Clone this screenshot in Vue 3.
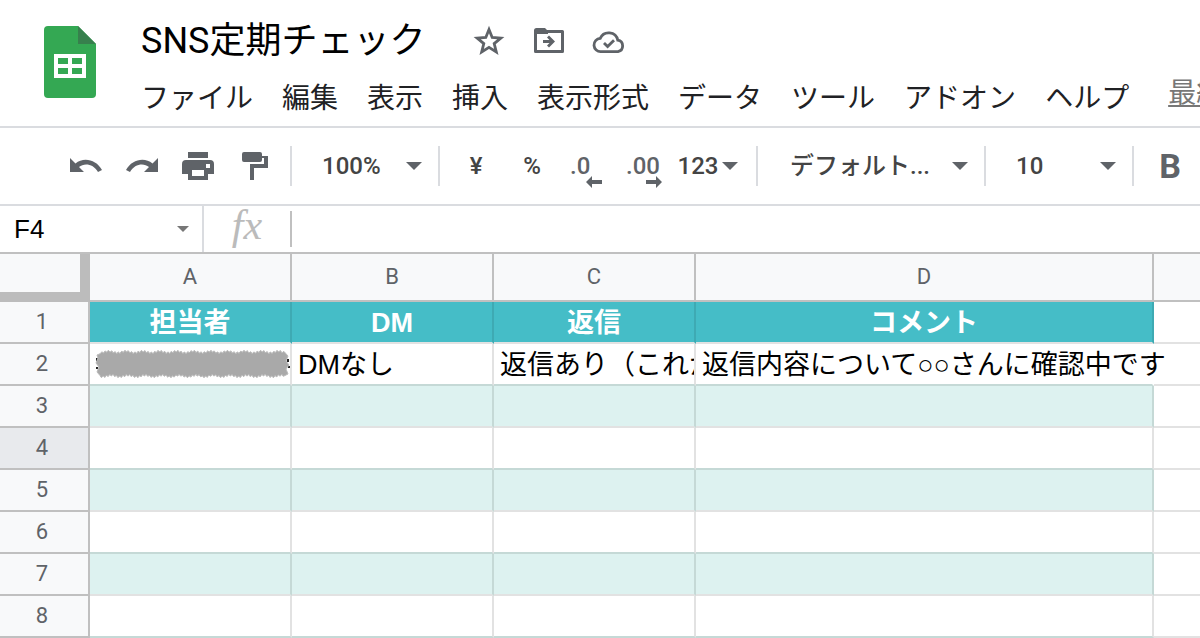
<template>
  <div class="sheet-app">
    <header class="header">
      <svg class="logo" viewBox="0 0 52 72" aria-hidden="true">
        <path d="M4 0H34L52 18V68a4 4 0 0 1-4 4H4a4 4 0 0 1-4-4V4a4 4 0 0 1 4-4z" fill="#34a853" />
        <path d="M34 0L52 18H34z" fill="#37804d" />
        <path
          d="M10 28H42V52H10zM14 32V38H24V32zM28 32V38H38V32zM14 42V48H24V42zM28 42V48H38V42z"
          fill="#fff"
          fill-rule="evenodd"
        />
      </svg>
      <div class="header-main">
        <div class="title-row">
          <h1>{{ title }}</h1>
          <div class="title-actions">
            <button type="button" aria-label="スター">
              <svg viewBox="0 0 36 36">
                <path
                  d="M18 6.5l3.2 8 8.6.6-6.6 5.5 2.1 8.4-7.3-4.6-7.3 4.6 2.1-8.4-6.6-5.5 8.6-.6z"
                  class="stroke"
                  stroke-width="2.8"
                />
              </svg>
            </button>
            <button type="button" aria-label="移動">
              <svg viewBox="0 0 36 36">
                <path d="M4.5 8.500H31.5V28.500H4.5z" class="stroke" stroke-width="3" stroke-linejoin="round" />
                <path d="M3 11V7.500a2.500 2.500 0 0 1 2.500-2.500H14l3 3v3z" />
                <path d="M12 17h6.500l-2.500-2.500 2-2L24 18.500l-6 6-2-2 2.500-2.500H12z" />
              </svg>
            </button>
            <button type="button" aria-label="保存済み">
              <svg viewBox="0 0 36 36">
                <path
                  d="M10 28.600a6.600 6.600 0 0 1-.8-13.200A9.300 9.300 0 0 1 26.800 17.200 5.800 5.800 0 0 1 27 28.600z"
                  class="stroke"
                  stroke-width="2.800"
                />
                <path d="M13 20l3.600 3.600 6.400-6.400" class="stroke" stroke-width="2.800" />
              </svg>
            </button>
          </div>
        </div>
        <nav class="menu">
          <button v-for="item in menus" :key="item" type="button">{{ item }}</button>
          <a href="#" class="last-edit">最終</a>
        </nav>
      </div>
    </header>

    <div class="toolbar">
      <button type="button" aria-label="元に戻す">
        <svg class="icon" viewBox="0 0 36 36">
          <path d="M2 10v14h14l-5-5c5.500-4.500 14.500-3 19 5l4-2C28.500 11.500 15.500 8.500 7.500 15.500z" />
        </svg>
      </button>
      <button type="button" aria-label="やり直し">
        <svg class="icon" viewBox="0 0 36 36">
          <path d="M34 10v14H20l5-5c-5.500-4.500-14.500-3-19 5l-4-2C7.500 11.500 20.500 8.500 28.500 15.500z" />
        </svg>
      </button>
      <button type="button" aria-label="印刷">
        <svg class="icon" viewBox="0 0 36 36">
          <path d="M8 4H28V10H8z" />
          <path
            d="M6 12H30a4 4 0 0 1 4 4V26H28V32H8V26H2V16a4 4 0 0 1 4-4zM26 16V20H30V16zM12 22V28H24V22z"
            fill-rule="evenodd"
          />
        </svg>
      </button>
      <button type="button" aria-label="書式を貼り付け">
        <svg class="icon" viewBox="0 0 36 36">
          <path d="M8 4H24a2 2 0 0 1 2 2V8H32V20H18V32H14V16H28V10H26V12a2 2 0 0 1-2 2H8a2 2 0 0 1-2-2V6a2 2 0 0 1 2-2z" />
        </svg>
      </button>
      <span class="separator"></span>
      <label class="picker">
        <select aria-label="ズーム">
          <option>100%</option>
        </select>
        <span class="caret"></span>
      </label>
      <span class="separator"></span>
      <button type="button">¥</button>
      <button type="button">%</button>
      <button type="button" class="decimal">
        .0
        <svg viewBox="0 0 16 12"><path d="M0 6l6-6v4h10v4H6v4z" /></svg>
      </button>
      <button type="button" class="decimal more">
        .00
        <svg viewBox="0 0 16 12"><path d="M16 6l-6-6v4H0v4h10v4z" /></svg>
      </button>
      <button type="button" class="format">123<span class="caret"></span></button>
      <span class="separator"></span>
      <label class="picker font-picker">
        <select aria-label="フォント">
          <option>デフォルト...</option>
        </select>
        <span class="caret"></span>
      </label>
      <span class="separator"></span>
      <label class="picker">
        <select aria-label="フォントサイズ">
          <option>10</option>
        </select>
        <span class="caret"></span>
      </label>
      <span class="separator"></span>
      <button type="button" class="bold">B</button>
    </div>

    <div class="formula-bar">
      <label class="name-box">
        <input v-model="activeCell" type="text" aria-label="名前ボックス" />
        <span class="caret"></span>
      </label>
      <span class="fx">fx</span>
      <input v-model="formula" class="formula" type="text" aria-label="数式" />
    </div>

    <table class="grid">
      <colgroup>
        <col class="col-head" />
        <col class="col-std" />
        <col class="col-std" />
        <col class="col-std" />
        <col class="col-wide" />
        <col />
      </colgroup>
      <thead>
        <tr>
          <td class="corner"></td>
          <th v-for="col in columns" :key="col" scope="col">{{ col }}</th>
          <th class="rest"></th>
        </tr>
      </thead>
      <tbody>
        <tr v-for="row in rows" :key="row.no" :class="row.type">
          <th scope="row" :class="{ active: row.no === 4 }">{{ row.no }}</th>
          <td v-for="(col, i) in columns" :key="col" :class="{ spill: row.no === 2 && col === 'D' }">
            <svg v-if="row.no === 2 && i === 0" class="mask" viewBox="0 0 194 28">
              <path d="M1 8v3M1 17v2M192 9v3M193 16v2" stroke="#222" stroke-width="2" />
              <path :d="maskPath" fill="#a9a9a9" stroke="#bbb" />
            </svg>
            <div v-else class="cell">{{ row.cells[i] }}</div>
          </td>
          <td class="rest"></td>
        </tr>
      </tbody>
    </table>
  </div>
</template>

<script setup>
import { ref } from 'vue'

const title = ref('SNS定期チェック')
const activeCell = ref('F4')
const formula = ref('')

const menus = ['ファイル', '編集', '表示', '挿入', '表示形式', 'データ', 'ツール', 'アドオン', 'ヘルプ']
const columns = ['A', 'B', 'C', 'D']

const rows = [
  { no: 1, type: 'title', cells: ['担当者', 'DM', '返信', 'コメント'] },
  {
    no: 2,
    type: 'plain',
    cells: ['', 'DMなし', '返信あり（これか', '返信内容について○○さんに確認中です']
  },
  { no: 3, type: 'band', cells: [] },
  { no: 4, type: 'plain', cells: [] },
  { no: 5, type: 'band', cells: [] },
  { no: 6, type: 'plain', cells: [] },
  { no: 7, type: 'band', cells: [] },
  { no: 8, type: 'plain', cells: [] }
]

// rough brush edge: uneven steps along both long sides
const edge = (x) => Math.round((2 + Math.sin(x * 1.9) + Math.sin(x * 0.37) * 0.8) * 10) / 10
const top = []
const bottom = []
for (let x = 4; x <= 188; x += 1) {
  top.push(`${x} ${edge(x)}`)
  bottom.unshift(`${x} ${28 - edge(x + 40)}`)
}
const maskPath = `M${top.join('L')}L192 6L190 11L193 15L190 19L192 24L${bottom.join('L')}L1 22L3 17L0 13L2 8L1 5z`
</script>

<style>
body {
  margin: 0;
  background: #fff;
}
</style>

<style scoped>
.sheet-app {
  font-family: Roboto, 'Noto Sans CJK JP', sans-serif;
  color: #000;
  overflow: hidden;
}

button,
select,
input {
  font: inherit;
  color: inherit;
  background: none;
  border: none;
  padding: 0;
  margin: 0;
  outline: none;
}

button,
select {
  cursor: pointer;
}

svg {
  display: block;
  fill: #5f6368;
}

.stroke {
  fill: none;
  stroke: #5f6368;
}

.header {
  display: flex;
  gap: 45px;
  padding-left: 44px;
  height: 126px;
  border-bottom: 2px solid #dadce0;
}

.logo {
  flex: none;
  width: 52px;
  height: 72px;
  margin-top: 26px;
}

.header-main {
  flex: 1;
  min-width: 0;
}

.title-row {
  display: flex;
  align-items: center;
  gap: 46px;
  height: 77px;
  padding-top: 2px;
}

h1 {
  margin: 0;
  font-size: 36px;
  font-weight: 400;
  line-height: 48px;
  white-space: nowrap;
}

.title-actions {
  display: flex;
  gap: 24px;
}

.title-actions svg {
  width: 36px;
  height: 36px;
}

.menu {
  display: flex;
  gap: 29px;
  font-size: 28px;
  line-height: 40px;
  color: #202124;
  white-space: nowrap;
}

.menu button {
  flex: none;
}

.last-edit {
  margin-left: 10px;
  line-height: 30px;
  color: #777;
}

.toolbar {
  display: flex;
  align-items: center;
  height: 76px;
  padding-left: 58px;
  border-bottom: 2px solid #dadce0;
  font-size: 24px;
  font-weight: 500;
  color: #444;
}

.toolbar button {
  display: flex;
  flex: none;
  align-items: center;
  justify-content: center;
  width: 56px;
  height: 40px;
}

.icon {
  width: 36px;
  height: 36px;
}

.separator {
  flex: none;
  width: 2px;
  height: 40px;
  margin: 0 8px;
  background: #dadce0;
}

.picker {
  display: flex;
  flex: none;
  align-items: center;
  width: 130px;
  height: 40px;
  position: relative;
}

.picker select {
  appearance: none;
  width: 100%;
  height: 36px;
  padding-left: 22px;
}

.font-picker {
  width: 210px;
}

.font-picker select {
  padding-left: 24px;
}

.caret {
  border: 8px solid transparent;
  border-top-color: #5f6368;
  border-bottom: none;
}

.picker .caret {
  position: absolute;
  right: 8px;
  pointer-events: none;
}

.toolbar .decimal {
  position: relative;
  justify-content: flex-start;
  padding-left: 10px;
  color: #5f6368;
}

.decimal svg {
  position: absolute;
  left: 26px;
  bottom: -2px;
  width: 16px;
  height: 12px;
}

.decimal.more svg {
  left: 30px;
}

.toolbar .format {
  width: 76px;
  gap: 4px;
  padding-right: 4px;
}

.toolbar .bold {
  font-size: 34px;
  font-weight: 700;
  color: #5f6368;
}

.formula-bar {
  display: flex;
  align-items: center;
  height: 46px;
  border-bottom: 2px solid #c0c0c0;
}

.name-box {
  display: flex;
  flex: none;
  align-items: center;
  width: 188px;
  height: 100%;
  padding-left: 14px;
  border-right: 2px solid #dadce0;
  font-family: 'Liberation Sans', sans-serif;
  font-size: 26px;
}

.name-box input {
  flex: 1;
  min-width: 0;
}

.name-box .caret {
  margin-right: 13px;
  border-width: 6px;
  border-bottom: none;
  border-top-color: #777;
}

.fx {
  width: 86px;
  height: 36px;
  border-right: 2px solid #c0c0c0;
  text-align: center;
  font: italic 42px/28px 'Liberation Serif', serif;
  color: #bbb;
}

.formula {
  flex: 1;
  min-width: 0;
  padding: 0 8px;
  font-size: 26px;
}

.grid {
  width: 100%;
  table-layout: fixed;
  border-collapse: separate;
  border-spacing: 0;
}

.col-head {
  width: 90px;
}

.col-std {
  width: 202px;
}

.col-wide {
  width: 458px;
}

.grid th,
.grid td {
  box-sizing: border-box;
  height: 42px;
  padding: 0;
  border-right: 2px solid #e2e2e2;
  border-bottom: 2px solid #e2e2e2;
}

.grid thead th,
.grid tbody th {
  background: #f8f9fa;
  border-color: #c0c0c0;
  font-size: 22px;
  font-weight: 400;
  line-height: 26px;
  color: #5f6368;
}

.grid thead th {
  height: 48px;
}

.grid tbody th {
  padding-right: 4px;
}

.grid tbody th.active {
  background: #e8eaed;
}

.grid .corner {
  background: #f8f9fa;
  border-right: 10px solid #bcbcbc;
  border-bottom: 10px solid #bcbcbc;
}

.grid .rest {
  border-right: none;
}

.cell {
  box-sizing: border-box;
  height: 40px;
  padding: 1px 6px 0;
  overflow: hidden;
  font-family: 'Liberation Sans', 'Noto Sans CJK JP', sans-serif;
  font-size: 27px;
  line-height: 40px;
  white-space: nowrap;
}

/* text runs on over the empty neighbour */
.spill .cell {
  overflow: visible;
}

.grid .spill {
  border-right-color: transparent;
}

.title td:not(.rest) {
  background: #45bdc7;
  border-right-color: #3eaab3;
}

.title .cell {
  font-weight: 700;
  text-align: center;
  color: #fff;
}

.band td:not(.rest) {
  background: #ddf2f0;
  border-right-color: #c5d9d6;
}

.plain td:not(.rest) {
  border-bottom-color: #c5d9d6;
}

.mask {
  width: 194px;
  height: 28px;
  margin: 0 0 0 6px;
  overflow: visible;
}
</style>
